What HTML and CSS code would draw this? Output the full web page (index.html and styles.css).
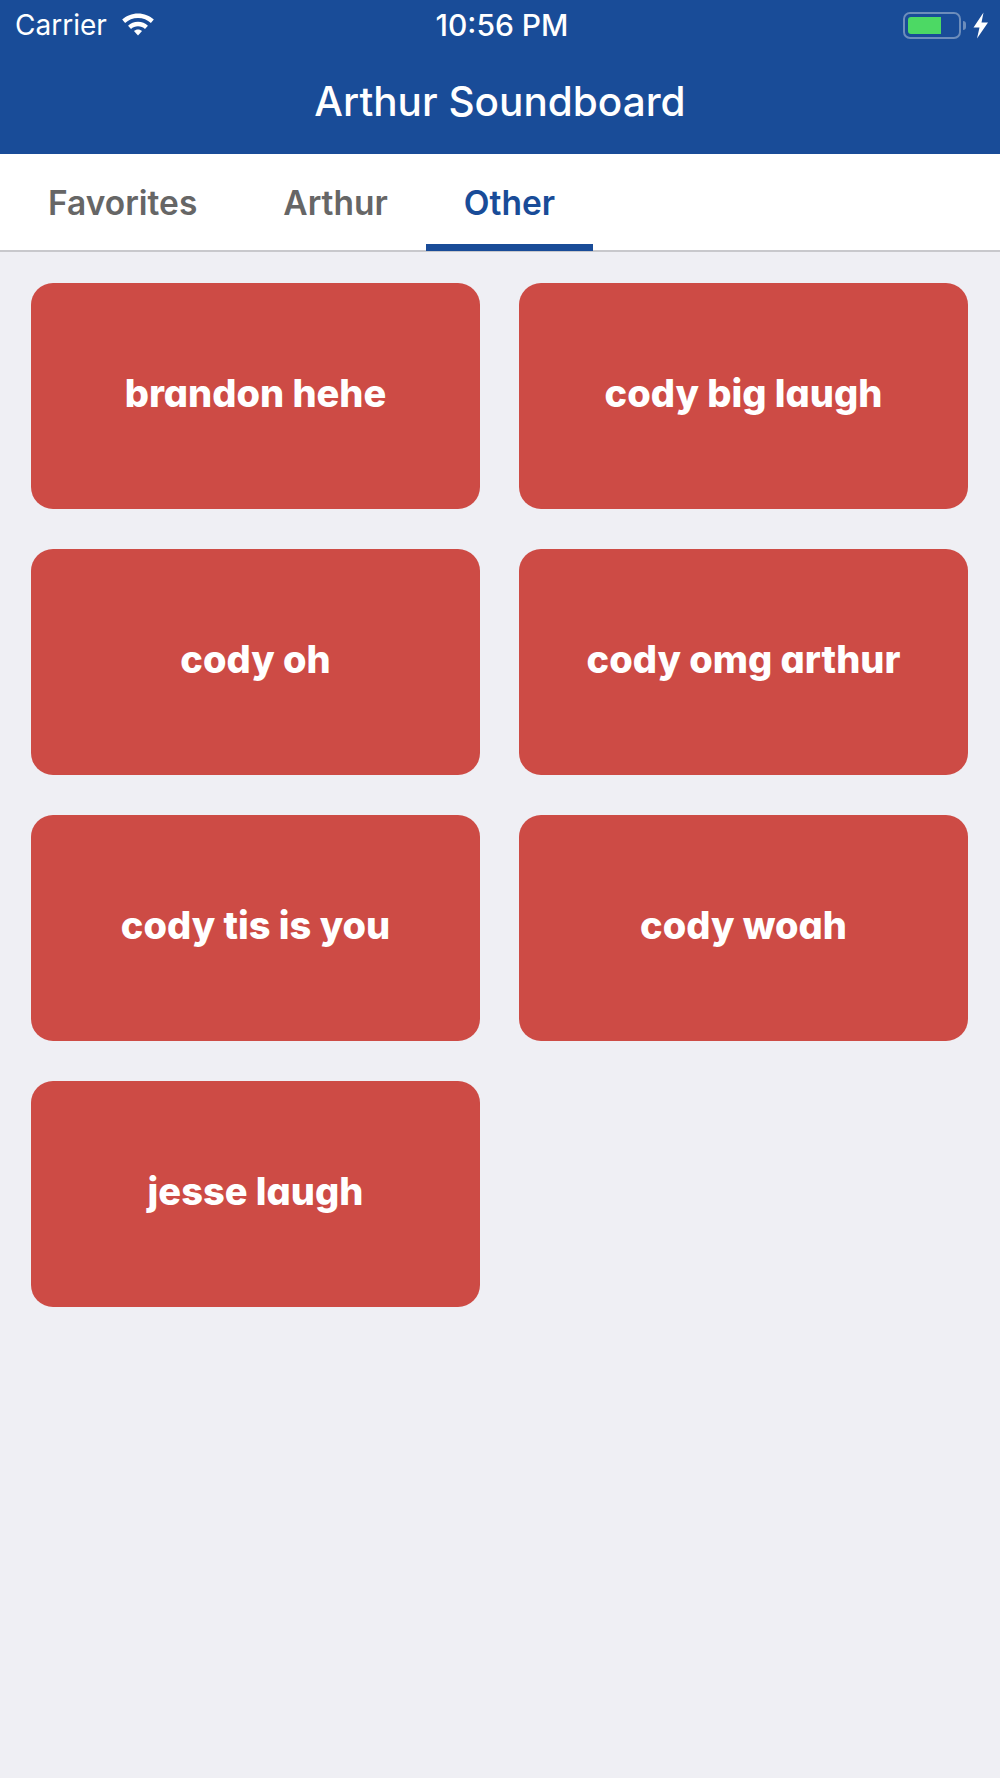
FILE: index.html
```html
<!DOCTYPE html>
<html lang="en">

<head>
  <meta charset="UTF-8">
  <meta name="viewport" content="width=device-width, initial-scale=1.0">
  <title>Arthur Soundboard</title>
  <link rel="stylesheet" href="styles.css">
</head>

<body>
  <header class="header">
    <div class="status-bar">
      <div class="status-left">
        <span class="carrier">Carrier</span>
        <svg class="wifi" width="34" height="23" viewBox="0 0 36 25">
          <path d="M18 0.5C11.2 0.5 5.2 3 0.8 7.2L4 10.8C7.6 7.4 12.6 5.3 18 5.3S28.4 7.4 32 10.8L35.2 7.2C30.8 3 24.8 0.5 18 0.5Z" fill="#fff" />
          <path d="M18 9.5C13.8 9.5 10 11.1 7.2 13.8L10.4 17.3C12.4 15.4 15.1 14.3 18 14.3S23.6 15.4 25.6 17.3L28.8 13.8C26 11.1 22.2 9.5 18 9.5Z" fill="#fff" />
          <path d="M18 18C16.3 18 14.8 18.6 13.6 19.7L18 24.5L22.4 19.7C21.2 18.6 19.7 18 18 18Z" fill="#fff" />
        </svg>
      </div>
      <span class="clock">10:56 PM</span>
      <div class="status-right">
        <div class="battery">
          <div class="battery-fill"></div>
        </div>
        <div class="battery-cap"></div>
        <svg class="bolt" width="16" height="27" viewBox="0 0 16 27">
          <path d="M10.5 0.5L0.5 15.5H6.5L4 26.5L15 10.5H8.5Z" fill="#fff" />
        </svg>
      </div>
    </div>
    <h1 class="title">Arthur Soundboard</h1>
  </header>

  <nav class="tabs">
    <a class="tab" href="#favorites">Favorites</a>
    <a class="tab" href="#arthur">Arthur</a>
    <a class="tab active" href="#other">Other</a>
  </nav>

  <main class="sounds">
    <button class="sound">brandon hehe</button>
    <button class="sound">cody big laugh</button>
    <button class="sound">cody oh</button>
    <button class="sound">cody omg arthur</button>
    <button class="sound">cody tis is you</button>
    <button class="sound">cody woah</button>
    <button class="sound">jesse laugh</button>
  </main>
</body>

</html>
```

FILE: styles.css
```css
* {
  box-sizing: border-box;
}

html,
body {
  height: 100%;
}

body {
  display: flex;
  flex-direction: column;
  margin: 0;
  background: #efeff4;
  font-family: Inter, "Liberation Sans", sans-serif;
}

.header {
  height: 154px;
  background: #194c98;
  color: #fff;
}

.status-bar {
  display: grid;
  grid-template-columns: 1fr auto 1fr;
  align-items: center;
  height: 50px;
  padding: 0 11px 0 15px;
}

.status-left {
  display: flex;
  align-items: center;
  gap: 14px;
}

.carrier {
  font-size: 28px;
}

.wifi {
  margin-top: -2px;
}

.clock {
  font-size: 30px;
  font-weight: 500;
}

.status-right {
  display: flex;
  align-items: center;
  justify-content: flex-end;
}

.battery {
  width: 58px;
  height: 27px;
  padding: 3px;
  border: 2px solid #6d8dbb;
  border-radius: 7px;
}

.battery-fill {
  width: 33px;
  height: 100%;
  border-radius: 3px 0 0 3px;
  background: #4cd964;
}

.battery-cap {
  width: 3px;
  height: 9px;
  margin-left: 2px;
  border-radius: 0 3px 3px 0;
  background: #6d8dbb;
}

.bolt {
  margin-left: 7px;
}

.title {
  margin: 27px 0 0;
  font-size: 40.5px;
  font-weight: 500;
  line-height: 50px;
  text-align: center;
}

.tabs {
  display: flex;
  height: 98px;
  padding-left: 10px;
  border-bottom: 2px solid #c8c8cc;
  background: #fff;
}

.tab {
  display: flex;
  align-items: center;
  padding: 0 38px;
  border-top: 7px solid transparent;
  border-bottom: 7px solid transparent;
  margin-bottom: -1px;
  color: #666;
  font-size: 33.5px;
  font-weight: 600;
  text-decoration: none;
}

.tab:first-child {
  margin-right: 10px;
}

.tab.active {
  border-bottom-color: #194c98;
  color: #194c98;
}

.sounds {
  display: grid;
  grid-template-columns: 449px 449px;
  grid-auto-rows: 226px;
  gap: 40px 39px;
  padding: 31px;
}

.sound {
  padding: 0 0 6px;
  border: none;
  border-radius: 22px;
  background: #cd4b45;
  color: #fff;
  font-family: Inter, sans-serif;
  font-size: 38px;
  font-weight: 800;
  font-feature-settings: "cv11";
}
```
